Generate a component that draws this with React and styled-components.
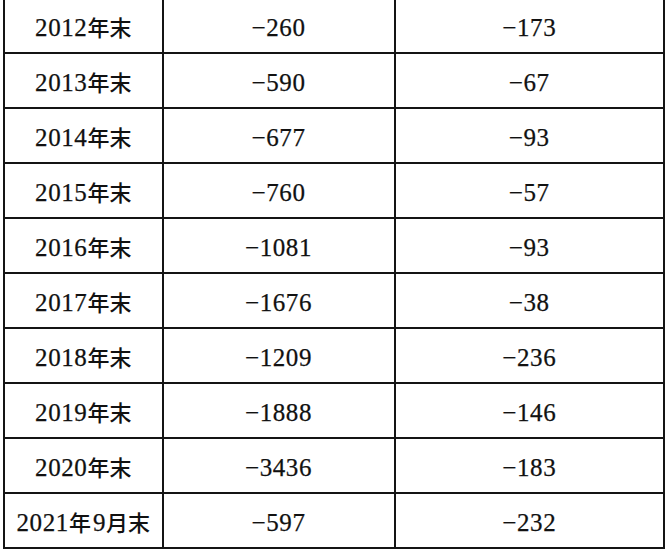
import React from "react";
import styled, { createGlobalStyle } from "styled-components";

const rows = [
  ["2012年末", "-260", "-173"],
  ["2013年末", "-590", "-67"],
  ["2014年末", "-677", "-93"],
  ["2015年末", "-760", "-57"],
  ["2016年末", "-1081", "-93"],
  ["2017年末", "-1676", "-38"],
  ["2018年末", "-1209", "-236"],
  ["2019年末", "-1888", "-146"],
  ["2020年末", "-3436", "-183"],
  ["2021年9月末", "-597", "-232"],
];

// split a label into latin / CJK runs so the CJK part gets its own size
function Label({ text }) {
  const parts = text.match(/[\u4e00-\u9fff]+|[^\u4e00-\u9fff]+/g) || [];
  return parts.map((p, i) =>
    /[\u4e00-\u9fff]/.test(p) ? <Cjk key={i}>{p}</Cjk> : <span key={i}>{p}</span>
  );
}

// the source uses a long thin minus
const fmt = (v) => v.replace("-", "\u2212");

export default function App() {
  return (
    <>
      <GlobalStyle />
      <Page>
        <Table>
          <colgroup>
            <col style={{ width: 158.5 }} />
            <col style={{ width: 232 }} />
            <col style={{ width: 269.5 }} />
          </colgroup>
          <tbody>
            {rows.map(([year, a, b]) => (
              <Row key={year}>
                <Cell>
                  <Label text={year} />
                </Cell>
                <Cell>{fmt(a)}</Cell>
                <Cell>{fmt(b)}</Cell>
              </Row>
            ))}
          </tbody>
        </Table>
      </Page>
    </>
  );
}

//Styled components
const GlobalStyle = createGlobalStyle`
  html, body {
    margin: 0;
    padding: 0;
    background: #ffffff;
    overflow: hidden;
  }
`;

const Page = styled.div`
  padding-left: 3px;
  width: 667px;
  height: 549px;
  overflow: hidden;
  box-sizing: border-box;
`;

const Table = styled.table`
  margin-top: -3.5px;
  width: 662px;
  table-layout: fixed;
  border-collapse: collapse;
  border: 2px solid #141414;
  font-family: "Liberation Serif", "Noto Sans CJK SC", serif;
  font-size: 25px;
  color: #111111;
`;

const Row = styled.tr`
  height: 55px;
`;

const Cell = styled.td`
  border: 2px solid #141414;
  padding: 5px 0 0;
  text-align: center;
  vertical-align: middle;
  white-space: nowrap;
  line-height: 1;
  letter-spacing: 0.6px;
  -webkit-text-stroke: 0.25px #111111;
`;

const Cjk = styled.span`
  font-family: "Noto Sans CJK SC", sans-serif;
  font-size: 22px;
  font-weight: 500;
  letter-spacing: 2px;
  -webkit-text-stroke: 0;
  &:last-child {
    letter-spacing: 0;
  }
`;
